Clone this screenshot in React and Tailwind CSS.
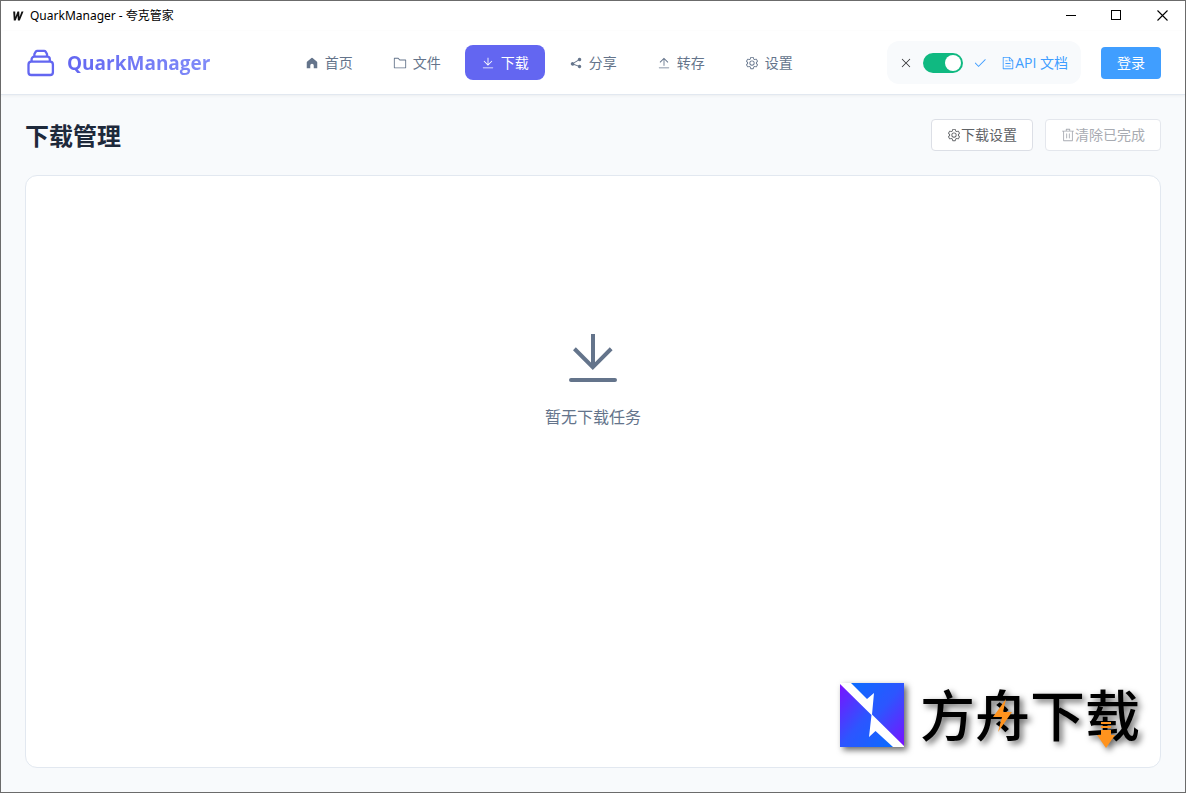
const ICONS = {
  home: 'M470 146Q512 112 554 146L860 396Q896 426 896 472V896H640V690Q640 570 512 570 384 570 384 690V896H128V472Q128 426 164 396z',
  folder:
    'M128 192v640h768V320H485.76L357.504 192zm-32-64h287.872l128.384 128H928a32 32 0 0 1 32 32v576a32 32 0 0 1-32 32H96a32 32 0 0 1-32-32V160a32 32 0 0 1 32-32',
  download:
    'M160 832h704a32 32 0 1 1 0 64H160a32 32 0 1 1 0-64m384-253.696 236.288-236.352 45.248 45.248L508.8 704 192 387.2l45.248-45.248L480 584.704V128h64z',
  share:
    'm679.872 348.8-301.76 188.608a127.808 127.808 0 0 1 5.12 52.16l279.936 104.96a128 128 0 1 1-22.464 59.904l-279.872-104.96a128 128 0 1 1-16.64-166.272l301.696-188.608a128 128 0 1 1 33.92 54.272z',
  upload:
    'M160 832h704a32 32 0 1 1 0 64H160a32 32 0 1 1 0-64m384-578.304V704h-64V247.296L237.248 490.048 192 444.8 508.8 128l316.8 316.8-45.312 45.248L544 253.696z',
  setting:
    'M600.704 64a32 32 0 0 1 30.464 22.208l35.2 109.376c14.784 7.232 28.928 15.36 42.432 24.512l112.384-24.192a32 32 0 0 1 34.432 15.36L944.32 364.8a32 32 0 0 1-4.032 37.504l-77.12 85.12a357.12 357.12 0 0 1 0 49.024l77.12 85.248a32 32 0 0 1 4.032 37.504l-88.704 153.6a32 32 0 0 1-34.432 15.296L708.8 803.904c-13.44 9.088-27.648 17.28-42.368 24.512l-35.264 109.376A32 32 0 0 1 600.704 960H423.296a32 32 0 0 1-30.464-22.208L357.696 828.48a351.616 351.616 0 0 1-42.56-24.64l-112.32 24.256a32 32 0 0 1-34.432-15.36L79.68 659.2a32 32 0 0 1 4.032-37.504l77.12-85.248a357.12 357.12 0 0 1 0-48.896l-77.12-85.248A32 32 0 0 1 79.68 364.8l88.704-153.6a32 32 0 0 1 34.432-15.296l112.32 24.256c13.568-9.152 27.776-17.408 42.56-24.64l35.2-109.312A32 32 0 0 1 423.232 64H600.64zm-23.424 64H446.72l-36.352 113.088-24.512 11.968a294.113 294.113 0 0 0-34.816 20.096l-22.656 15.36-116.224-25.088-65.28 113.152 79.68 88.192-1.92 27.136a293.12 293.12 0 0 0 0 40.192l1.92 27.136-79.808 88.192 65.344 113.152 116.224-25.024 22.656 15.296a294.113 294.113 0 0 0 34.816 20.096l24.512 11.968L446.72 896h130.688l36.48-113.152 24.448-11.904a288.282 288.282 0 0 0 34.752-20.096l22.592-15.296 116.288 25.024 65.28-113.152-79.744-88.192 1.92-27.136a293.12 293.12 0 0 0 0-40.256l-1.92-27.136 79.808-88.128-65.344-113.152-116.288 24.96-22.592-15.232a287.616 287.616 0 0 0-34.752-20.096l-24.448-11.904L577.344 128zM512 320a192 192 0 1 1 0 384 192 192 0 0 1 0-384m0 64a128 128 0 1 0 0 256 128 128 0 0 0 0-256',
  close:
    'M764.288 214.592 512 466.88 259.712 214.592a31.936 31.936 0 0 0-45.12 45.12L466.752 512 214.528 764.224a31.936 31.936 0 1 0 45.12 45.184L512 557.184l252.288 252.288a31.936 31.936 0 0 0 45.12-45.12L557.12 512.064l252.288-252.352a31.936 31.936 0 1 0-45.12-45.184z',
  check:
    'M406.656 706.944 195.84 496.256a32 32 0 1 0-45.248 45.248l256 256 512-512a32 32 0 0 0-45.248-45.248L406.592 706.944z',
  document:
    'M832 384H576V128H192v768h640zm-26.496-64L640 154.496V320zM160 64h480l256 256v608a32 32 0 0 1-32 32H160a32 32 0 0 1-32-32V96a32 32 0 0 1 32-32m160 448h384v64H320zm0-192h160v64H320zm0 384h384v64H320z',
  trash:
    'M160 256H96a32 32 0 0 1 0-64h256V95.936a32 32 0 0 1 32-32h256a32 32 0 0 1 32 32V192h256a32 32 0 1 1 0 64h-64v672a32 32 0 0 1-32 32H192a32 32 0 0 1-32-32zm448-64v-64H416v64zM224 896h576V256H224zm192-128a32 32 0 0 1-32-32V416a32 32 0 0 1 64 0v320a32 32 0 0 1-32 32m192 0a32 32 0 0 1-32-32V416a32 32 0 0 1 64 0v320a32 32 0 0 1-32 32',
};

function Icon({ name, className = 'size-3.5' }) {
  return (
    <svg viewBox="0 0 1024 1024" fill="currentColor" aria-hidden="true" className={`shrink-0 ${className}`}>
      <path d={ICONS[name]} />
    </svg>
  );
}

const NAV = [
  { icon: 'home', label: '首页' },
  { icon: 'folder', label: '文件' },
  { icon: 'download', label: '下载', active: true },
  { icon: 'share', label: '分享' },
  { icon: 'upload', label: '转存' },
  { icon: 'setting', label: '设置' },
];

function TitleBar() {
  return (
    <div className="flex h-[30px] shrink-0 items-center bg-white pl-[10px] font-['Noto_Sans','Noto_Sans_CJK_SC',sans-serif] text-xs text-black">
      <svg viewBox="0 0 14 14" aria-hidden="true" className="size-3.5">
        <path d="M2.2 2.5h2l.2 5.6 2.1-5.6h1.7l.3 5.6 2-5.6h2L8.800 11.500H6.900L6.500 6.800 4.700 11.500H2.800z" fill="#111" />
      </svg>
      <span className="ml-[5px]">QuarkManager - 夸克管家</span>
      <div className="ml-auto flex h-7 self-start">
        <button aria-label="最小化" className="grid w-[45px] place-items-center">
          <svg viewBox="0 0 11 11" className="size-[11px]" shapeRendering="crispEdges"><path d="M0 5.500h10" stroke="#000" /></svg>
        </button>
        <button aria-label="最大化" className="grid w-[45px] place-items-center">
          <svg viewBox="0 0 11 11" className="size-[11px]" shapeRendering="crispEdges"><path d="M.5 .5h9v9h-9z" fill="none" stroke="#000" /></svg>
        </button>
        <button aria-label="关闭" className="grid w-[46px] place-items-center">
          <svg viewBox="0 0 11 11" className="size-[11px]"><path d="M.5 .5l10 10M10.500 .5l-10 10" stroke="#000" strokeWidth="1.100" /></svg>
        </button>
      </div>
    </div>
  );
}

function Header() {
  return (
    <header className="flex h-16 shrink-0 items-center justify-between border-b border-[#e2e8f0] bg-white px-6 shadow-[0_1px_3px_rgba(0,0,0,0.05)]">
      <div className="flex items-center gap-2.5 text-[#6366f1]">
        <svg viewBox="0 0 32 32" fill="none" stroke="currentColor" strokeWidth="2.300" strokeLinejoin="round" aria-hidden="true" className="size-8">
          <rect x="3.500" y="14.700" width="24.400" height="13.300" rx="2.800" />
          <path d="M6.600 14.500v-2.200a2.600 2.600 0 0 1 2.600-2.600h13a2.600 2.600 0 0 1 2.600 2.600v2.200" />
          <path d="M9.400 9.500V7l1.400-2.300q.5-.8 1.500-.8h6.800q1 0 1.500 .8L22 7v2.500" />
        </svg>
        <span className="bg-linear-to-r from-[#6366f1] to-[#818cf8] bg-clip-text font-['Open_Sans'] text-[19px] leading-7 font-bold text-transparent">
          QuarkManager
        </span>
      </div>

      <nav className="flex gap-2">
        {NAV.map(({ icon, label, active }) => (
          <a
            key={label}
            href="#"
            aria-current={active ? 'page' : undefined}
            className={`flex h-[35px] items-center gap-1.5 rounded-lg px-4 text-sm ${
              active ? 'bg-[#6366f1] text-white' : 'text-[#64748b]'
            }`}
          >
            <Icon name={icon} />
            {label}
          </a>
        ))}
      </nav>

      <div className="flex items-center gap-5">
        <div className="flex h-[43px] items-center rounded-xl bg-[#f8fafc] pr-[13px] pl-3">
          <label className="flex items-center gap-2.5">
            <Icon name="close" className="size-3.5 text-[#303133]" />
            <input type="checkbox" role="switch" defaultChecked aria-label="API 服务" className="peer sr-only" />
            <span className="flex h-5 w-10 items-center justify-end rounded-full bg-[#10b981] p-0.5">
              <span className="size-4 rounded-full bg-white" />
            </span>
            <Icon name="check" className="size-3.5 text-[#409eff]" />
          </label>
          <a href="#" className="ml-3.5 flex items-center text-sm text-[#409eff]">
            <Icon name="document" />
            API 文档
          </a>
        </div>
        <button className="h-8 rounded bg-[#409eff] px-4 text-sm text-white">登录</button>
      </div>
    </header>
  );
}

function Watermark() {
  return (
    <div className="absolute right-5 bottom-4 flex items-center gap-4 drop-shadow-[3px_3px_3px_rgba(0,0,0,0.6)]">
      <svg viewBox="0 0 64 64" className="size-16" aria-hidden="true">
        <defs>
          <linearGradient id="upper" x1="0" y1="0" x2="1" y2="1">
            <stop offset="0" stopColor="#0a6cff" />
            <stop offset="0.500" stopColor="#2d55ff" />
            <stop offset="1" stopColor="#7a12ff" />
          </linearGradient>
          <linearGradient id="lower" x1="0" y1="0" x2="1" y2="1">
            <stop offset="0" stopColor="#7a12ff" />
            <stop offset="0.500" stopColor="#2d55ff" />
            <stop offset="1" stopColor="#0a6cff" />
          </linearGradient>
        </defs>
        <path d="M0 0h64v64H0z" fill="#fff" />
        <path d="M11 0h53v63L32 31.500 34 10l-7 6z" fill="url(#upper)" />
        <path d="M0 1l31.500 31L29 54l6.500-6L53 64H0z" fill="url(#lower)" />
      </svg>
      <div className="relative text-[55px] leading-[72px] font-medium whitespace-nowrap text-black">
        方舟下载
        <svg viewBox="0 0 220 72" className="absolute inset-0 size-full" aria-hidden="true">
          <path d="M86 20 73 38h9l-4 15 14-20h-9z" fill="#ff931e" />
          <path d="M181 43h10v2h-10zM181 47h10v2h-10zM181 51h10v5h4l-9 13-9-13h4z" fill="#ff931e" />
        </svg>
      </div>
    </div>
  );
}

export default function App() {
  return (
    <div className="flex min-h-screen flex-col border border-[#6b6b6b] bg-[#f8fafc] font-['Open_Sans','Noto_Sans_CJK_SC',sans-serif]">
      <TitleBar />
      <Header />
      <main className="flex flex-1 flex-col p-6">
        <div className="flex h-8 items-center justify-between">
          <h1 className="pt-0.5 text-2xl leading-9 font-bold text-[#1e293b]">下载管理</h1>
          <div className="flex gap-3 text-sm">
            <button className="flex h-8 items-center rounded border border-[#dcdfe6] bg-white px-[15px] text-[#606266]">
              <Icon name="setting" />
              下载设置
            </button>
            <button disabled className="flex h-8 items-center rounded border border-[#e4e7ed] bg-white px-[15px] text-[#a8abb2]">
              <Icon name="trash" />
              清除已完成
            </button>
          </div>
        </div>
        <section className="relative mt-6 flex flex-1 flex-col items-center rounded-xl border border-[#e2e8f0] bg-white pt-[150px] text-[#64748b]">
          <Icon name="download" className="size-16" />
          <p className="mt-4 text-base leading-[22px]">暂无下载任务</p>
          <Watermark />
        </section>
      </main>
    </div>
  );
}
